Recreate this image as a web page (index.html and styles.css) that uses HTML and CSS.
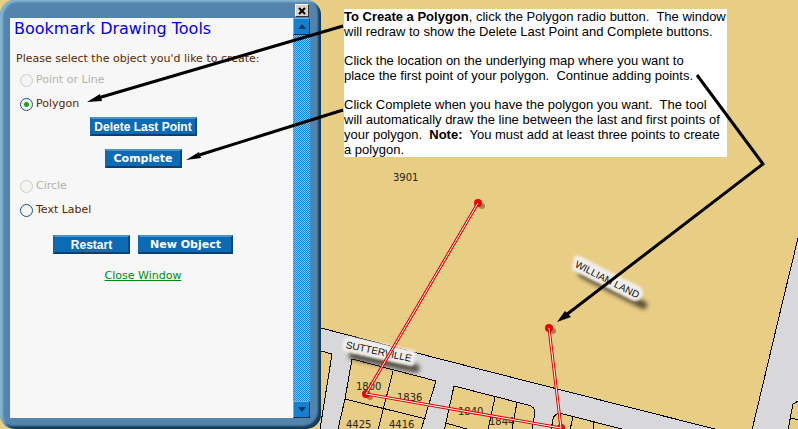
FILE: index.html
```html
<!DOCTYPE html>
<html lang="en">
<head>
<meta charset="utf-8">
<title>Bookmark Drawing Tools</title>
<link rel="stylesheet" href="styles.css">
</head>
<body>
<svg class="map" aria-label="Parcel map">
  <defs>
    <filter id="soft" x="-20%" y="-80%" width="140%" height="260%"><feGaussianBlur stdDeviation="2"/></filter>
    <filter id="glow" x="-20%" y="-80%" width="140%" height="260%"><feGaussianBlur stdDeviation="1"/></filter>
  </defs>
  <path class="road" d="M300 323L321 328L440 359L620 405L715 429H300Z"/>
  <path class="road" d="M798 238L783 300L752 429H798Z"/>
  <g class="parcel">
    <path d="M300 345L321 351L332 354L320 429V440H300Z"/>
    <path d="M352 359L436 381L421 430L420 440H336L338 429L345 399Z"/>
    <path d="M393 371L378 430M345 399L426 419"/>
    <path d="M454 386L528 405Q535 407 535 412L532 430V440H442L445 427Z"/>
    <path d="M495 397L488 430M517 402L512 430M446 423L470 430"/>
    <path d="M551 430L553 419Q555 412 563 414L622 429V440H551Z"/>
    <path d="M573 417L570 430M594 422L593 430"/>
    <path d="M800 400L793 404L788 430V440H800ZM790 418L800 420"/>
    <path class="edge" d="M300 323L321 328L440 359L620 405L715 429M799 234L783 300L752 430"/>
  </g>
  <g class="numbers">
    <text x="393" y="181">3901</text>
    <text x="356" y="390">1800</text>
    <text x="397" y="401">1836</text>
    <text x="458" y="415">1840</text>
    <text x="489" y="425">1844</text>
    <text x="346" y="428">4425</text>
    <text x="389" y="428">4416</text>
  </g>
  <g class="street" transform="translate(346 344) rotate(12)">
    <rect class="shade" x="5" y="5" width="72" height="9" rx="4" filter="url(#soft)"/>
    <text class="halo" x="0" y="4" filter="url(#glow)">SUTTERVILLE</text>
    <text x="0" y="4">SUTTERVILLE</text>
  </g>
  <g class="street" transform="translate(576 263) rotate(27)">
    <rect class="shade" x="7" y="3" width="76" height="8" rx="4" filter="url(#soft)"/>
    <text class="halo" x="0" y="4" filter="url(#glow)">WILLIAM LAND</text>
    <text x="0" y="4">WILLIAM LAND</text>
  </g>
  <g class="dot-shadow"><circle cx="482" cy="206" r="3"/><circle cx="370" cy="397" r="3"/><circle cx="553" cy="331" r="3"/></g>
  <g class="dot"><circle cx="478" cy="203" r="4"/><circle cx="366" cy="394" r="4"/><circle cx="549" cy="328" r="4"/><circle cx="561" cy="428" r="4"/></g>
  <path class="line" d="M478 203L366 394L561 428L549 328"/>
  <path class="line-core" d="M478 203L366 394L561 428L549 328"/>
</svg>

<main class="layout">
  <section class="panel">
    <header class="panel-bar">
      <button class="close" type="button" aria-label="Close"><svg width="8" height="8"><path d="M1 1L7 7M7 1L1 7"/></svg></button>
    </header>
    <div class="panel-body">
      <form class="tools">
        <h1>Bookmark Drawing Tools</h1>
        <p class="prompt">Please select the object you'd like to create:</p>
        <label class="choice"><input type="radio" name="shape" disabled><span>Point or Line</span></label>
        <label class="choice"><input type="radio" name="shape" checked><span>Polygon</span></label>
        <div class="steps">
          <button class="btn wide" type="button">Delete Last Point</button>
          <button class="btn alt" type="button">Complete</button>
        </div>
        <label class="choice"><input type="radio" name="shape" disabled><span>Circle</span></label>
        <label class="choice"><input type="radio" name="shape"><span>Text Label</span></label>
        <div class="actions">
          <button class="btn" type="button">Restart</button>
          <button class="btn alt medium" type="button">New Object</button>
        </div>
        <a class="close-link" href="#">Close Window</a>
      </form>
      <div class="scroll">
        <button type="button" aria-label="Scroll up"><svg width="8" height="5"><path d="M0 5L4 0L8 5Z"/></svg></button>
        <button type="button" aria-label="Scroll down"><svg width="8" height="5"><path d="M0 0L4 5L8 0Z"/></svg></button>
      </div>
    </div>
  </section>

  <aside class="note">
    <p><b>To Create a Polygon</b>, click the Polygon radio button.&nbsp; The window<br>will redraw to show the Delete Last Point and Complete buttons.</p>
    <p>Click the location on the underlying map where you want to<br>place the first point of your polygon.&nbsp; Continue adding points.</p>
    <p>Click Complete when you have the polygon you want.&nbsp; The tool<br>will automatically draw the line between the last and first points of<br>your polygon.&nbsp; <b>Note:</b>&nbsp; You must add at least three points to create<br>a polygon.</p>
  </aside>
</main>

<svg class="arrows" aria-hidden="true">
  <path class="shaft" d="M343 26L98 98M343 110L196 156M697 75L763 164L566 315"/>
  <path d="M87 102L100 94L102 101ZM186 160L199 152L201 158ZM557 322L565 311L571 317Z"/>
</svg>
</body>
</html>
```

FILE: styles.css
```css
* { box-sizing: border-box; }

body {
  margin: 0;
  min-height: 100vh;
  overflow: hidden;
  background: #e8cd85;
  color: #000;
  font-family: "Liberation Sans", Arial, sans-serif;
}

h1, p { margin: 0; font-weight: normal; }

button { padding: 0; font: inherit; }

.map, .arrows {
  position: absolute;
  inset: 0;
  width: 100%;
  height: 100%;
}

.road { fill: #d8d8da; }
.parcel path { fill: #e8cd85; stroke: #000; stroke-width: 1; shape-rendering: crispEdges; }
.parcel .edge { fill: none; }
.numbers { font: 10px "DejaVu Sans", Verdana, sans-serif; fill: #2c2410; }
.street { font-size: 10px; fill: #111; }
.street .halo { fill: none; stroke: #f1eeea; stroke-width: 8; stroke-linejoin: round; }
.shade { fill: #3d3527; opacity: 0.8; }
.dot { fill: #f00000; }
.dot-shadow { fill: #a1834a; }
.line { fill: none; stroke: #e00000; stroke-width: 3; }
.line-core { fill: none; stroke: #fff; stroke-width: 1; }

.arrows { pointer-events: none; }
.shaft { fill: none; stroke: #000; stroke-width: 3; }

.layout {
  position: relative;
  display: grid;
  grid-template-columns: 321px 1fr;
  column-gap: 23px;
  align-items: start;
  min-height: 100vh;
}

.panel {
  display: flex;
  flex-direction: column;
  align-self: stretch;
  padding: 0 11px 11px 10px;
  border-radius: 15px;
  background: #5284ae;
  box-shadow: inset 3px 2px 2px #84b3d2, inset -3px -3px 2px #153d59;
}

.panel-bar {
  display: flex;
  justify-content: flex-end;
  align-items: flex-end;
  height: 18px;
  padding: 0 1px 1px 0;
}

.close {
  display: grid;
  place-items: center;
  width: 14px;
  height: 13px;
  border: 1px solid;
  border-color: #fff #333 #333 #fff;
  background: #d8d4cc;
}
.close path { stroke: #000; stroke-width: 2; }

.panel-body {
  display: flex;
  flex: 1;
  background: #f7f7f7;
}

.tools {
  display: flex;
  flex: 1;
  flex-direction: column;
  padding: 0 23px 0 6px;
  color: #5a2800;
  font: 11px/24px "DejaVu Sans", Verdana, sans-serif;
  white-space: nowrap;
}

h1 {
  margin: 0 0 8px -2px;
  color: #0000e8;
  font-size: 16px;
  line-height: 22px;
}

.prompt { padding: 2px 0 0; line-height: 18px; }

.choice {
  display: flex;
  align-items: center;
  gap: 3px;
  height: 24px;
  padding-left: 4px;
}

.choice input {
  appearance: none;
  width: 13px;
  height: 13px;
  margin: 0;
  border: 1px solid #1f4f80;
  border-radius: 50%;
  background: #f4f4f2;
}
.choice input:checked { background: radial-gradient(circle, #21a121 0 2px, #f4f4f2 3px); }
.choice input:disabled { border-color: #cbcbc6; }
.choice input:disabled + span { color: #b4b3a5; }

.steps {
  display: flex;
  flex-direction: column;
  align-items: center;
  gap: 13px;
  padding: 1px 0 6px;
}

.actions {
  display: flex;
  justify-content: center;
  gap: 8px;
  padding: 13px 0 10px;
}

.btn {
  width: 77px;
  height: 19px;
  border: 2px solid;
  border-color: #4a94c9 #07497f #07406f #1466a4;
  background: #0d6ab5;
  color: #fff;
  font: bold 12px/14px "Liberation Sans", Arial, sans-serif;
}
.btn.alt { font-family: "DejaVu Sans", Verdana, sans-serif; font-size: 11px; }
.btn.wide { width: 107px; }
.btn.medium { width: 95px; }

.close-link { align-self: center; color: #008a10; }

.scroll {
  display: flex;
  flex-direction: column;
  justify-content: space-between;
  width: 17px;
  background: repeating-conic-gradient(#1684d4 0 25%, #86c3ea 0 50%) 0 0 / 2px 2px;
}
.scroll button {
  display: grid;
  place-items: center;
  width: 17px;
  height: 17px;
  border: 1px solid;
  border-color: #69b4e6 #052f52 #052f52 #69b4e6;
  background: #1580d0;
}
.scroll path { fill: #0a3c66; }

.note {
  display: grid;
  gap: 14px;
  justify-self: start;
  width: 383px;
  margin-top: 9px;
  background: #fff;
  font-size: 13px;
  line-height: 15px;
  white-space: nowrap;
}
```
